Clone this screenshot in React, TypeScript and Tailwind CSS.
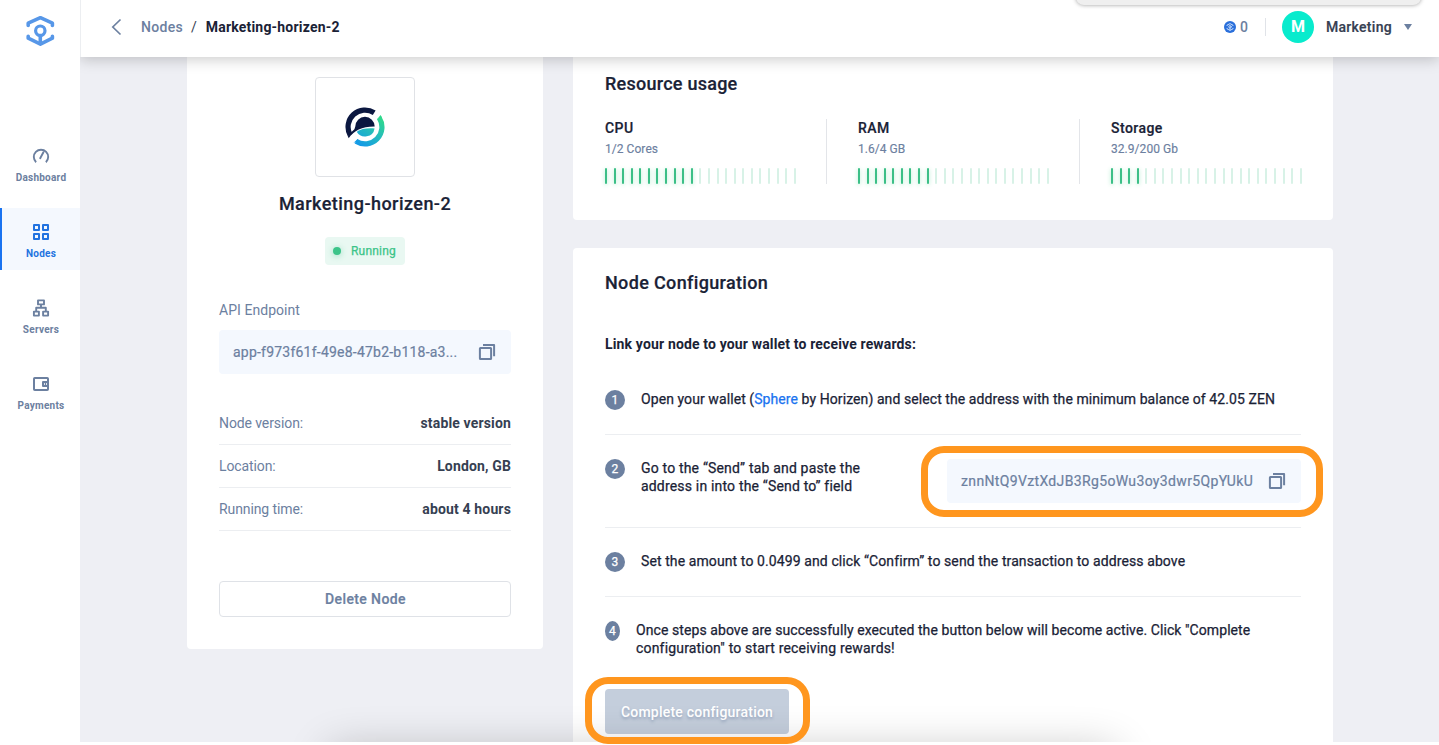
import type { ReactNode } from "react";

function LogoMark() {
  return (
    <svg width="30" height="32" viewBox="25 15 30 32" fill="none" stroke="#5797e8" strokeWidth="3.6" strokeLinejoin="round" strokeLinecap="round">
      <path d="M28.2 25.4v-2.2l12.2-5.5 12 5.5v2.2M28.2 36.2v2l12.2 6 12-6v-2" />
      <circle cx="40.3" cy="30.7" r="4.7" strokeWidth="3.2" />
      <path d="M40.3 36v8" strokeLinecap="butt" />
    </svg>
  );
}

function GaugeIcon() {
  return (
    <svg width="18" height="18" viewBox="0 0 18 18" fill="none" stroke="currentColor" strokeWidth="1.9">
      <path d="M4.1 15.2A7.2 7.2 0 1 1 13.9 15.2" />
      <path d="M8.2 11.2 11.4 5.2" strokeLinecap="round" />
    </svg>
  );
}

function NodesIcon() {
  return (
    <svg width="18" height="18" viewBox="0 0 18 18" fill="none" stroke="currentColor" strokeWidth="2">
      <path d="M2 2h5v5H2zM11 2h5v5h-5zM2 11h5v5H2zM11 11h5v5h-5z" strokeLinejoin="round" />
    </svg>
  );
}

function ServersIcon() {
  return (
    <svg width="18" height="18" viewBox="0 0 18 18" fill="none" stroke="currentColor" strokeWidth="1.9" strokeLinejoin="round">
      <path d="M6 1.4h6v4H6zM1.9 12.6h5v4h-5zM11.1 12.6h5v4h-5zM9 5.4v3.3M4.2 12.6V8.8h9.6v3.8" />
    </svg>
  );
}

function WalletIcon() {
  return (
    <svg width="18" height="18" viewBox="0 0 18 18" fill="none" stroke="currentColor" strokeWidth="2" strokeLinejoin="round">
      <rect x="2" y="3" width="14" height="12" rx="0.8" />
      <path d="M16 6.9h-5v4.2h5M12.8 9h1.4" />
    </svg>
  );
}

function CopyIcon() {
  return (
    <svg width="18" height="18" viewBox="0 0 18 18" fill="none" stroke="#6c80a0" strokeWidth="2" strokeLinejoin="round" className="shrink-0">
      <rect x="1.9" y="5" width="11.2" height="11.1" rx="0.5" />
      <path d="M5 1.9h11.1v11.3" />
    </svg>
  );
}

function CoinIcon() {
  return (
    <svg width="12" height="12" viewBox="0 0 12 12" fill="none" stroke="#c7dcfa" strokeWidth="1" strokeLinecap="round">
      <circle cx="6" cy="6" r="6" fill="#2a6fdb" stroke="none" />
      <path d="M3 4.6V4.2l3-1.6 3 1.6v.4M3 7.3v.5l3 1.6 3-1.6v-.5M6 7v2" />
      <circle cx="6" cy="5.8" r="1.2" />
    </svg>
  );
}

function HorizenLogo() {
  return (
    <svg width="40" height="40" viewBox="-20 -20 40 40" fill="none">
      <defs>
        <linearGradient id="hz" x1="14" y1="-10" x2="-4" y2="18" gradientUnits="userSpaceOnUse">
          <stop offset="0" stopColor="#2fd88c" />
          <stop offset="0.45" stopColor="#26bfb8" />
          <stop offset="1" stopColor="#149be6" />
        </linearGradient>
      </defs>
      <path d="M9.2-14.2A16.9 16.9 0 0 0-14.9 8" stroke="#0b1740" strokeWidth="5.2" />
      <path d="M-16.3 11.2C-11 3.5-3-.6 9.7-.5A9.7 9.7 0 0 0-9.7-.4L-10.6 2.2-13 4.5-17.2 9z" fill="#0b1740" />
      <path d="M-8.3 4.8C-4 1.8 2 .8 9.6 1.4A9.7 9.7 0 0 1-8.3 4.8z" fill="url(#hz)" />
      <path d="M14.2-9.2A16.9 16.9 0 0 1-9 14.3" stroke="url(#hz)" strokeWidth="5.2" />
      <path d="M11.8-7.6 15.6-12 17-9.5z" fill="#2fd88c" />
      <path d="M-11.6 15.9-7.4 12-7 14z" fill="#149be6" />
    </svg>
  );
}

function NavItem({ icon, label, active }: { icon: ReactNode; label: string; active?: boolean }) {
  return (
    <a
      className={
        "flex h-[62px] flex-col items-center border-l-2 pt-[15px] text-[10px] font-bold leading-[14px] tracking-[0.25px] " +
        (active ? "border-[#1a73f0] bg-[#f4f8fe] text-[#2273e0]" : "border-transparent text-[#6c80a0]")
      }
    >
      {icon}
      <span className="mt-[6px]">{label}</span>
    </a>
  );
}

function Meter({ title, usage, filled, last }: { title: string; usage: string; filled: number; last?: boolean }) {
  return (
    <div className={"w-[222px] shrink-0 " + (last ? "" : "border-r border-[#e3e5e9]")}>
      <h3 className="text-[14px] font-medium leading-[18px] tracking-[0.45px] text-[#1a2236] [-webkit-text-stroke:0.2px]">{title}</h3>
      <p className="mt-[3px] text-[12px] leading-[18px] tracking-[0.05px] text-[#6c80a0] [-webkit-text-stroke:0.15px]">{usage}</p>
      <div className="mt-[10px] flex h-4 w-[191px] justify-between">
        {Array.from({ length: 23 }, (_, i) => (
          <i
            key={i}
            className={i < filled ? "w-[2px] rounded-[1px] bg-[#3cbf87] shadow-[0_1px_4px_rgba(60,210,135,0.45)]" : "w-[2px] rounded-[1px] bg-[#d8f2e7]"}
          />
        ))}
      </div>
    </div>
  );
}

function Detail({ label, value }: { label: string; value: string }) {
  return (
    <div className="flex h-[43px] items-center justify-between border-b border-[#eceef1] text-[14px]">
      <span className="tracking-[-0.1px] text-[#6c80a0]">{label}</span>
      <span className="font-bold tracking-[0.15px] text-[#364052]">{value}</span>
    </div>
  );
}

function Step({ n, children, last }: { n: number; children: ReactNode; last?: boolean }) {
  return (
    <li className={"flex gap-4 pt-6 " + (last ? "" : "border-b border-[#eceef1] pb-6")}>
      <span
        className={
          "flex h-5 shrink-0 items-center justify-center rounded-[50%] bg-[#6c80a0] text-[12px] text-white " +
          (last ? "w-[15px]" : "w-5")
        }
      >
        {n}
      </span>
      {children}
    </li>
  );
}

export default function App() {
  return (
    <div className="relative h-[745px] w-[1439px] overflow-hidden bg-white font-['Roboto',sans-serif]">
      <div className="flex h-[742px]">
        <aside className="w-20 shrink-0 bg-white">
          <div className="flex h-[132px] justify-center pt-[15px]">
            <LogoMark />
          </div>
          <nav className="flex flex-col gap-[14px]">
            <NavItem icon={<GaugeIcon />} label="Dashboard" />
            <NavItem icon={<NodesIcon />} label="Nodes" active />
            <NavItem icon={<ServersIcon />} label="Servers" />
            <NavItem icon={<WalletIcon />} label="Payments" />
          </nav>
        </aside>

        <div className="flex min-w-0 flex-1 flex-col overflow-hidden bg-[#eeeff4]">
          <header className="relative z-10 flex h-[57px] shrink-0 items-center border-l border-[#eceef1] bg-white pb-[3px] pl-[30px] pr-[27px] text-[14px] shadow-[0_2px_14px_rgba(0,0,0,0.22)]">
            <svg width="12" height="18" viewBox="0 0 12 18" fill="none" stroke="#6c80a0" strokeWidth="1.7">
              <path d="M9.5 1.5 1.8 9l7.7 7.5" />
            </svg>
            <span className="ml-[18px] font-medium tracking-[0.3px] text-[#6c80a0]">Nodes</span>
            <span className="ml-[8px] mr-[9px] text-[#364052]">/</span>
            <span className="font-bold tracking-[0.2px] text-[#1a2236]">Marketing-horizen-2</span>
            <div className="ml-auto flex items-center">
              <CoinIcon />
              <span className="ml-[4px] mr-px font-medium text-[#6c80a0]">0</span>
              <span className="ml-4 h-[18px] w-px bg-[#e0e3e8]" />
              <span className="ml-4 flex size-8 items-center justify-center rounded-full bg-[#08ebcd] text-[16px] font-bold text-white">M</span>
              <span className="ml-3 font-medium tracking-[0.3px] text-[#364052] [-webkit-text-stroke:0.2px]">Marketing</span>
              <svg width="8" height="6" viewBox="0 0 8 6" className="ml-3">
                <path d="M0 0h8L4 6z" fill="#6c80a0" />
              </svg>
            </div>
          </header>

          <main className="flex flex-1 items-start gap-[30px] pl-[107px]">
            <section className="flex h-[592px] w-[356px] flex-col items-center rounded-b bg-white px-8 pt-5">
              <div className="flex size-[100px] shrink-0 items-center justify-center rounded-[4px] border border-[#e0e2e6]">
                <HorizenLogo />
              </div>
              <h1 className="mt-[15px] text-[18px] font-medium leading-6 tracking-[0.45px] text-[#1a2236] [-webkit-text-stroke:0.2px]">
                Marketing-horizen-2
              </h1>
              <div className="mt-[21px] flex h-7 w-20 items-center rounded-[4px] bg-[#e9f8f2] pl-2 text-[12px] tracking-[0.2px] text-[#3cc489] [-webkit-text-stroke:0.25px]">
                <i className="mr-[10px] size-2 rounded-full bg-[#3cc489] shadow-[0_1px_6px_rgba(60,196,137,0.45)]" />
                Running
              </div>
              <p className="mt-[35px] self-start text-[14px] leading-5 tracking-[0.05px] text-[#6c80a0]">API Endpoint</p>
              <div className="mt-[10px] flex h-11 w-full items-center justify-between rounded-[4px] bg-[#f4f8fe] pl-[14px] pr-[15px] text-[14px] tracking-[0.22px] text-[#6c80a0] [-webkit-text-stroke:0.2px]">
                app-f973f61f-49e8-47b2-b118-a3...
                <CopyIcon />
              </div>
              <div className="mt-7 w-full">
                <Detail label="Node version:" value="stable version" />
                <Detail label="Location:" value="London, GB" />
                <Detail label="Running time:" value="about 4 hours" />
              </div>
              <button className="mt-[50px] h-9 w-full rounded-[4px] border border-[#dfe2e7] bg-white pl-px text-[14px] font-medium tracking-[0.38px] text-[#6c80a0] [-webkit-text-stroke:0.2px]">
                Delete Node
              </button>
            </section>

            <div className="flex w-[760px] flex-col gap-7">
              <section className="h-[163px] rounded-b bg-white px-8 pt-[15px]">
                <h2 className="text-[18px] font-medium leading-6 tracking-[0.25px] text-[#1a2236] [-webkit-text-stroke:0.2px]">Resource usage</h2>
                <div className="mt-[23px] flex h-[65px] gap-[31px]">
                  <Meter title="CPU" usage="1/2 Cores" filled={11} />
                  <Meter title="RAM" usage="1.6/4 GB" filled={9} />
                  <Meter title="Storage" usage="32.9/200 Gb" filled={4} last />
                </div>
              </section>

              <section className="h-[520px] rounded-t bg-white px-8 pt-[23px]">
                <h2 className="text-[18px] font-medium leading-6 tracking-[0.35px] text-[#1a2236] [-webkit-text-stroke:0.2px]">Node Configuration</h2>
                <p className="mt-[39px] text-[14px] font-bold leading-5 tracking-[0.15px] text-[#1a2236]">
                  Link your node to your wallet to receive rewards:
                </p>
                <ol className="mt-3 text-[14px] leading-[18px] tracking-[0.08px] text-[#1a2236] [-webkit-text-stroke:0.25px]">
                  <Step n={1}>
                    <p className="whitespace-nowrap">
                      Open your wallet (<a className="text-[#1a73f0]">Sphere</a> by Horizen) and select the address with the minimum balance of 42.05 ZEN
                    </p>
                  </Step>
                  <Step n={2}>
                    <p className="whitespace-nowrap tracking-[0.18px]">
                      Go to the “Send” tab and paste the
                      <br />
                      address in into the “Send to” field
                    </p>
                    <div className="relative ml-auto flex h-11 w-[354px] items-center justify-between rounded-[4px] bg-[#f4f8fe] pl-[14px] pr-[15px] tracking-[0.35px] text-[#6c80a0] [-webkit-text-stroke:0.2px]">
                      znnNtQ9VztXdJB3Rg5oWu3oy3dwr5QpYUkU
                      <CopyIcon />
                      <div className="absolute -left-[26px] -top-[13px] h-[71px] w-[402px] rounded-[23px] border-[7px] border-[#ff961e]" />
                    </div>
                  </Step>
                  <Step n={3}>
                    <p className="tracking-[0.1px]">Set the amount to 0.0499 and click “Confirm” to send the transaction to address above</p>
                  </Step>
                  <Step n={4} last>
                    <p className="whitespace-nowrap">
                      Once steps above are successfully executed the button below will become active. Click "Complete
                      <br />
                      <span className="tracking-[0.18px]">configuration" to start receiving rewards!</span>
                    </p>
                  </Step>
                </ol>
                <button className="mt-8 h-[45px] w-[184px] rounded-[4px] bg-[#c4cedc] pt-[2px] text-[14px] font-medium tracking-[0.22px] text-white [text-shadow:0_2px_3px_rgba(90,110,150,0.45)]">
                  Complete configuration
                </button>
              </section>
            </div>
          </main>
        </div>
      </div>

      <div className="pointer-events-none absolute inset-x-0 top-0 z-20 h-[742px] overflow-hidden">
        <div className="absolute -top-5 left-[1076px] h-[25px] w-[345px] rounded-[8px] bg-[#efefef] shadow-[0_0_4px_rgba(0,0,0,0.4)]" />
        <div className="absolute left-[330px] top-[750px] h-10 w-[785px] shadow-[0_0_44px_rgba(0,0,0,0.24)]" />
      </div>
      <div className="absolute left-[585px] top-[677px] z-30 h-[67px] w-[225px] rounded-[23px] border-[7px] border-[#ff961e]" />
    </div>
  );
}
